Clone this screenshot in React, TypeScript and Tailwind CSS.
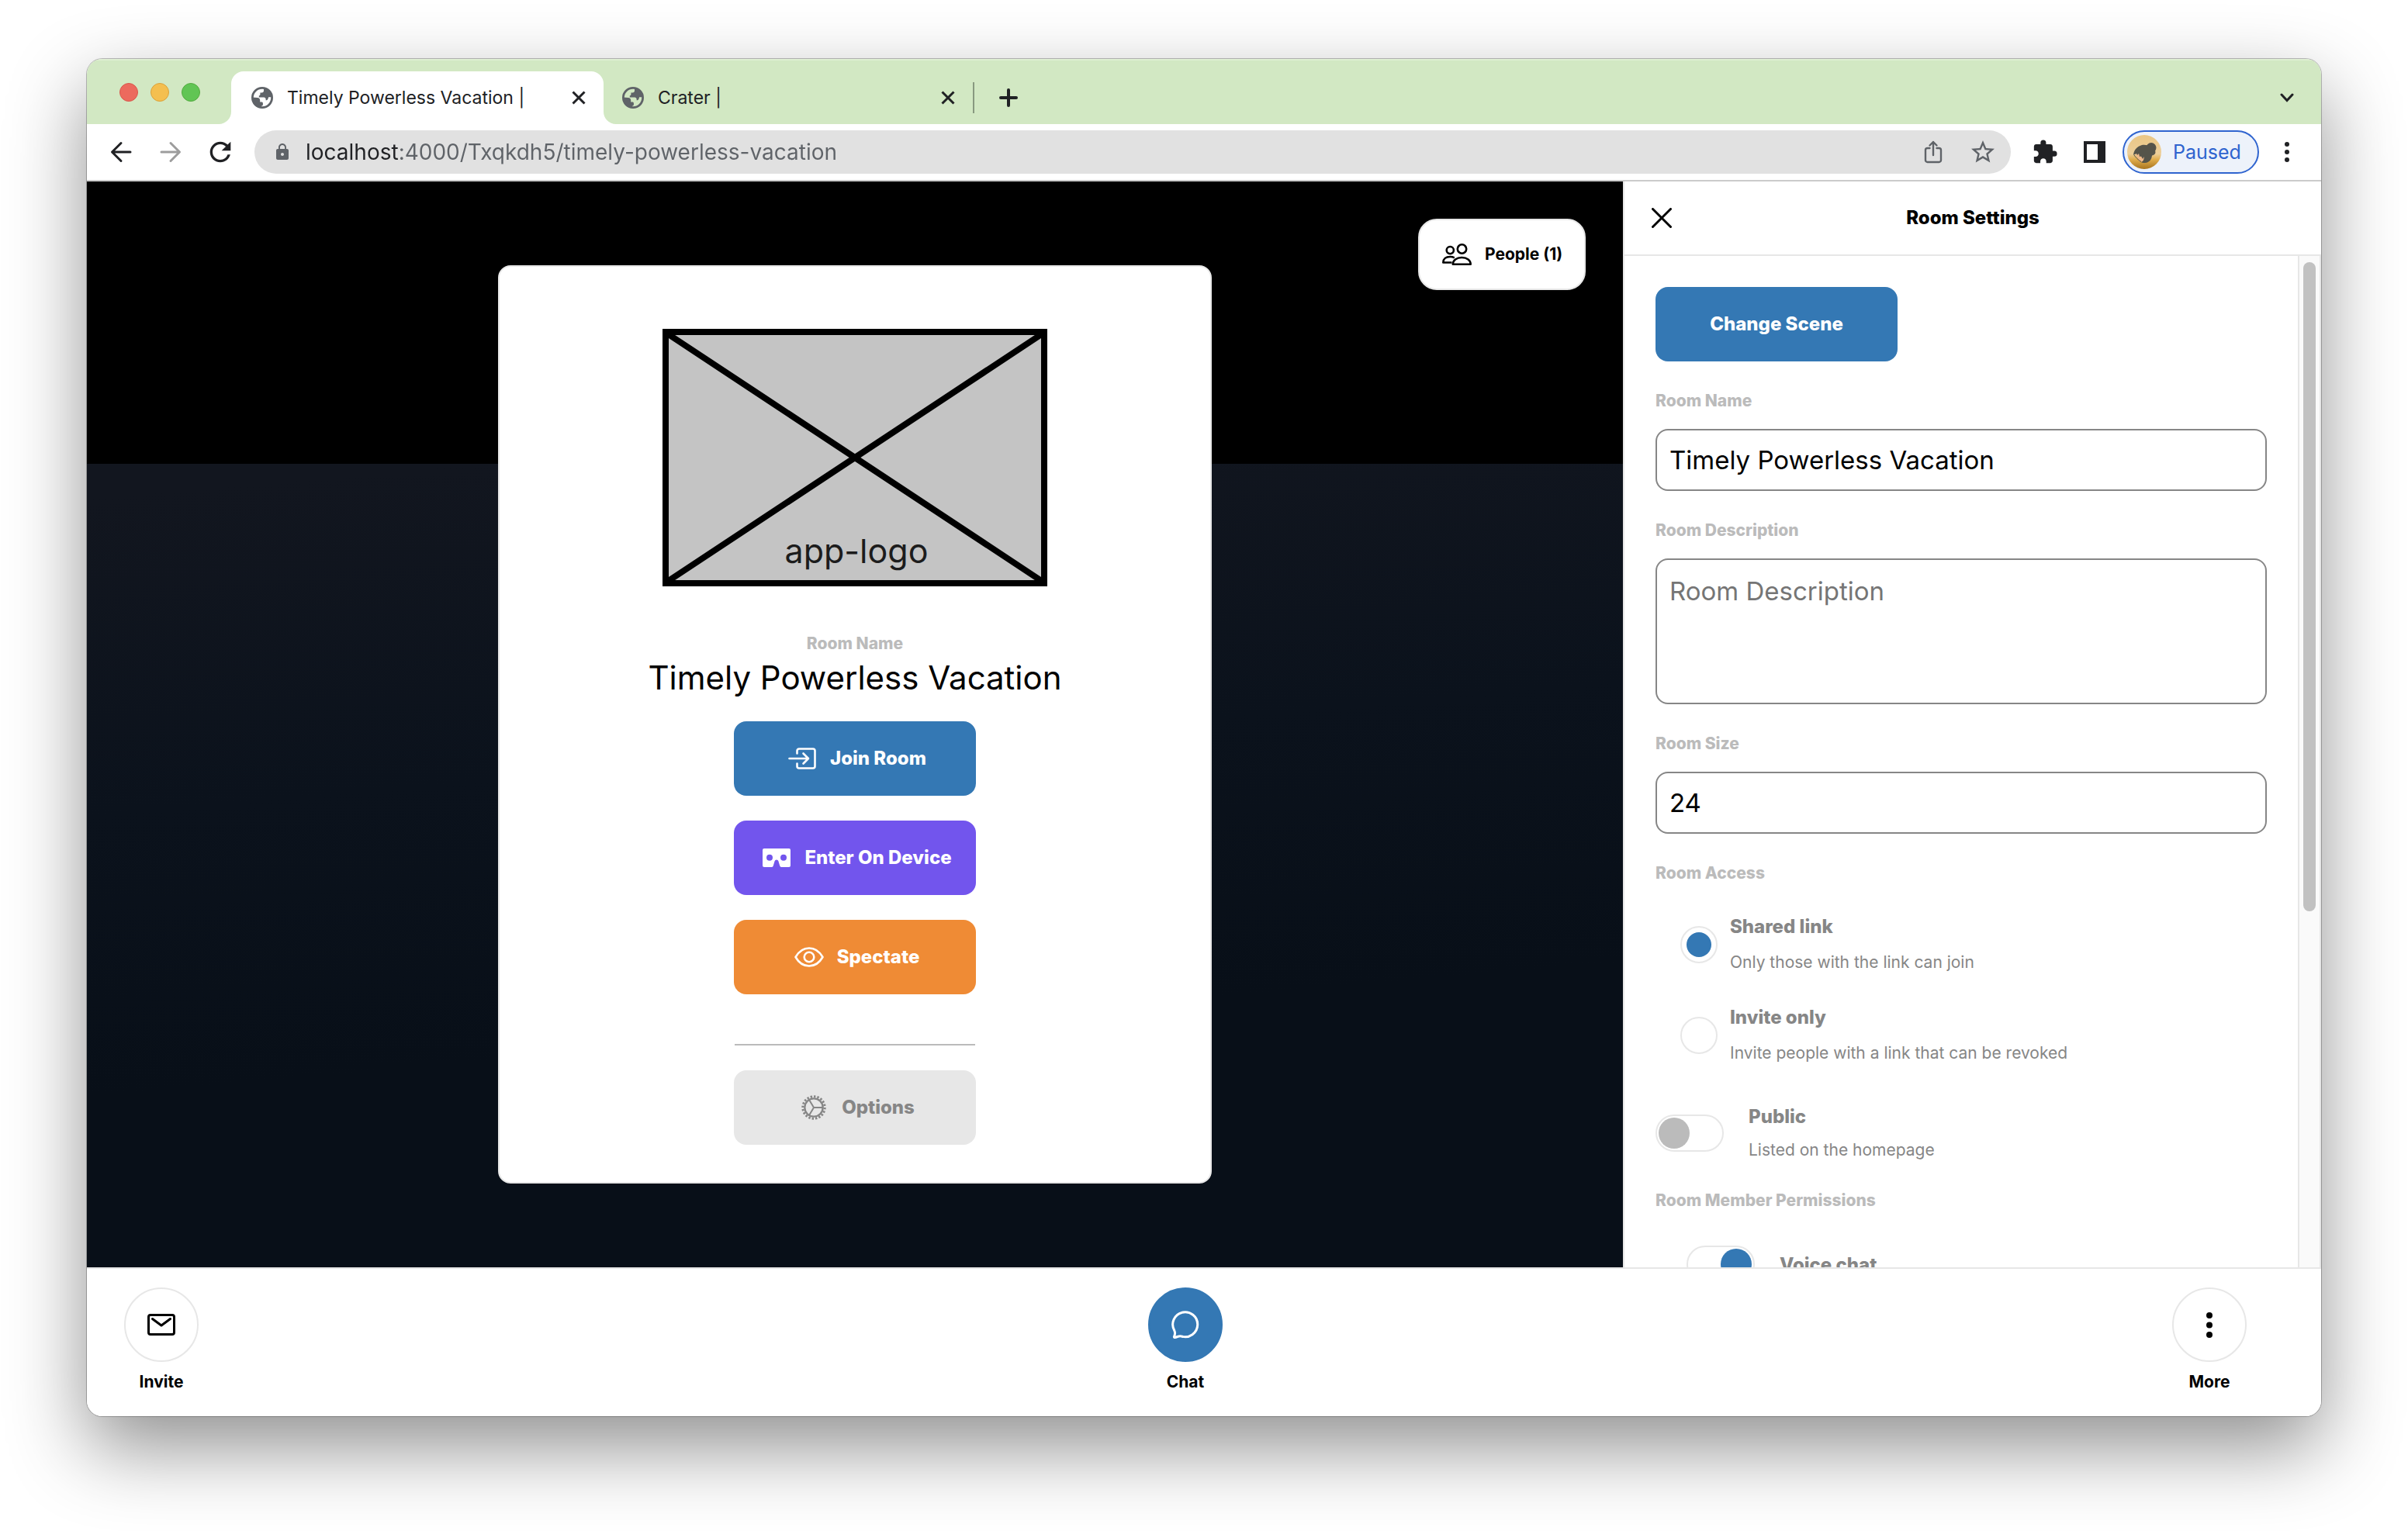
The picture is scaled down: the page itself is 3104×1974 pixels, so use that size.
import React from "react";
import { MdExtension, MdLock, MdRefresh, MdStarBorder } from "react-icons/md";

type IconProps = { className?: string };

/* ---------- Browser icons ---------- */

function GlobeIcon() {
  return (
    <svg viewBox="0 0 28 28" className="size-7 shrink-0 text-[#5f6368]" aria-hidden="true">
      <circle cx="14" cy="14" r="12.6" fill="none" stroke="currentColor" strokeWidth="2.8" />
      <path
        fill="currentColor"
        d="M16 2.2V5c0 1.500-1 2.500-2.600 2.500h-2v2.300c0 .900-.700 1.500-1.600 1.500v2.200h6.400c1.400 0 2.400 1 2.400 2.300v1.500c1.800 0 2.600-1 3-2.400l.500-1.600h4.400C26.500 8 22.500 3 16 2.200z"
      />
      <path
        fill="currentColor"
        d="M1.500 13.500 8 14c2 .200 3.200 1.500 3.200 3.200v2.200h2c1 0 1.700.700 1.700 1.700v1.700c0 1-.700 1.800-1.700 1.800l-.700 2C6 26 1.500 20.500 1.500 13.500z"
      />
    </svg>
  );
}

function CrossIcon({ className }: IconProps) {
  return (
    <svg viewBox="0 0 28 28" className={className} fill="none" stroke="currentColor" aria-hidden="true">
      <path d="M6.500 6.500l15 15M21.500 6.500l-15 15" strokeWidth="3" />
    </svg>
  );
}

function PlusIcon() {
  return (
    <svg viewBox="0 0 24 24" className="size-6" fill="none" stroke="currentColor" strokeWidth="4" strokeLinecap="round" aria-hidden="true">
      <path d="M12 2v20M2 12h20" />
    </svg>
  );
}

function ChevronIcon() {
  return (
    <svg viewBox="0 0 18 12" className="h-3 w-[18px]" fill="none" stroke="currentColor" strokeWidth="3" strokeLinecap="round" aria-hidden="true">
      <path d="M2 2l7 7.500L16 2" />
    </svg>
  );
}

function ArrowIcon({ className }: IconProps) {
  return (
    <svg viewBox="0 0 28 28" className={className} fill="none" stroke="currentColor" strokeWidth="3" strokeLinecap="round" strokeLinejoin="round" aria-hidden="true">
      <path d="M26 14H3M14 2.500L2.500 14 14 25.500" />
    </svg>
  );
}

function ShareIcon() {
  return (
    <svg viewBox="0 0 36 36" className="size-9" fill="none" stroke="currentColor" strokeWidth="2.400" strokeLinecap="round" strokeLinejoin="round" aria-hidden="true">
      <path d="M13.500 13H10.500a2.500 2.500 0 0 0-2.500 2.500v13A2.500 2.500 0 0 0 10.500 31h15a2.500 2.500 0 0 0 2.500-2.500v-13A2.500 2.500 0 0 0 25.500 13H22.500" />
      <path d="M18 22V5M13.500 9.500L18 5l4.500 4.500" />
    </svg>
  );
}

function SidePanelIcon() {
  return (
    <svg viewBox="0 0 28 28" className="size-7" aria-hidden="true">
      <path fill="currentColor" fillRule="evenodd" d="M0 0h28v28H0zM4 4v20h14V4z" />
    </svg>
  );
}

function DotsIcon() {
  return (
    <svg viewBox="0 0 6 26" className="h-[26px] w-1.5" fill="currentColor" aria-hidden="true">
      <circle cx="3" cy="3" r="3" />
      <circle cx="3" cy="13" r="3" />
      <circle cx="3" cy="23" r="3" />
    </svg>
  );
}

function Avatar() {
  return (
    <svg viewBox="0 0 44 44" className="size-11" aria-hidden="true">
      <defs>
        <linearGradient id="avatar-sky" x1="0" y1="0" x2="0" y2="1">
          <stop offset="0" stopColor="#e9c684" />
          <stop offset="0.550" stopColor="#edcf9a" />
          <stop offset="0.720" stopColor="#e0ad4c" />
          <stop offset="1" stopColor="#a8741f" />
        </linearGradient>
      </defs>
      <circle cx="22" cy="22" r="22" fill="url(#avatar-sky)" />
      <path fill="#efb98a" d="M11 25l5-6 6 3 1 9-4 4-4-2z" />
      <circle cx="31" cy="16.500" r="6.500" fill="#55544a" />
      <path
        fill="#55544a"
        d="M8 26c.500-6 4-11 11-13 7-1 14 2 17 7 1.500 4-1 6-4 6.500-.500 5-3 9-9 9.500-2.500.200-4-.300-5-1 3-1 4-4 3.500-7l-1.500 3-2-3.500-2 .500-1-4-2 2-1-2z"
      />
      <path fill="none" stroke="#55544a" d="M9 26c2 3 5 6 9 8.500" />
    </svg>
  );
}

/* ---------- Room icons ---------- */

function PeopleIcon() {
  return (
    <svg viewBox="0 0 38 28" className="h-7 w-[38px]" fill="none" stroke="currentColor" strokeWidth="2.600" strokeLinejoin="round" aria-hidden="true">
      <circle cx="25.500" cy="7" r="5.700" />
      <circle cx="10.300" cy="8.600" r="4.600" />
      <path d="M13.800 26.700c0-5 4.700-8.700 11.500-8.700s11.400 3.700 11.400 8.700z" />
      <path d="M12.500 24.500H1.300c0-4.500 3.500-7.500 9-7.500 2.200 0 4 .500 5.500 1.300" />
    </svg>
  );
}

function EnterIcon() {
  return (
    <svg viewBox="0 0 36 28" className="h-7 w-9" fill="none" stroke="currentColor" strokeWidth="2.600" strokeLinecap="round" strokeLinejoin="round" aria-hidden="true">
      <path d="M11.500 7.500V4a2.500 2.500 0 0 1 2.500-2.500h18A2.500 2.500 0 0 1 34.500 4v20a2.500 2.500 0 0 1-2.500 2.500H14a2.500 2.500 0 0 1-2.500-2.500v-3.500" />
      <path d="M1.500 14H26M19.500 7.500L26 14l-6.500 6.500" />
    </svg>
  );
}

function HeadsetIcon() {
  return (
    <svg viewBox="0 0 36 24" className="h-6 w-9" aria-hidden="true">
      <path
        fill="currentColor"
        fillRule="evenodd"
        d="M2 0h32a2 2 0 0 1 2 2v20a2 2 0 0 1-2 2H24.500a2.500 2.500 0 0 1-2.200-1.600l-1.900-6.200a2.500 2.500 0 0 0-4.800 0l-1.900 6.200A2.500 2.500 0 0 1 11.500 24H2a2 2 0 0 1-2-2V2a2 2 0 0 1 2-2zM9 7.800a4 4 0 1 0 0 8 4 4 0 0 0 0-8zM27 7.800a4 4 0 1 0 0 8 4 4 0 0 0 0-8z"
      />
    </svg>
  );
}

function EyeIcon() {
  return (
    <svg viewBox="0 0 38 26" className="h-[26px] w-[38px]" fill="none" stroke="currentColor" strokeWidth="2.600" strokeLinejoin="round" aria-hidden="true">
      <path d="M1.500 13C5.500 6 11.500 1.500 19 1.500S32.500 6 36.500 13C32.500 20 26.500 24.500 19 24.500S5.500 20 1.500 13z" />
      <circle cx="19" cy="13" r="6.300" />
    </svg>
  );
}

function GearIcon() {
  return (
    <svg viewBox="0 0 32 32" className="size-8" fill="none" stroke="currentColor" aria-hidden="true">
      <circle cx="16" cy="16" r="11.700" strokeWidth="2.300" />
      <circle cx="16" cy="16" r="14.200" strokeWidth="3" pathLength="80" strokeDasharray="2.200 1.800" />
      <path d="M16 16h11.500M16 16l-6-10M16 16l-6 10" strokeWidth="2" />
    </svg>
  );
}

function MailIcon() {
  return (
    <svg viewBox="0 0 36 28" className="h-7 w-9" fill="none" stroke="currentColor" strokeWidth="3" strokeLinecap="round" strokeLinejoin="round" aria-hidden="true">
      <rect x="1.500" y="1.500" width="33" height="25" rx="2.500" />
      <path d="M6.500 6.500L18 15 29.500 6.500" />
    </svg>
  );
}

function ChatIcon() {
  return (
    <svg viewBox="0 0 36 36" className="size-9" fill="none" stroke="currentColor" strokeWidth="3" strokeLinejoin="round" aria-hidden="true">
      <path d="M3.800 25.600A16 16 0 1 1 13 33c-3-1.200-5 .800-8.600 1.500-.800.100-1.200-.500-.900-1.200C4.800 30.500 5 28 3.800 25.600z" />
    </svg>
  );
}

function MoreIcon() {
  return (
    <svg viewBox="0 0 8 33" className="h-[33px] w-2" fill="currentColor" aria-hidden="true">
      <circle cx="4" cy="4" r="4" />
      <circle cx="4" cy="16.500" r="4" />
      <circle cx="4" cy="29" r="4" />
    </svg>
  );
}

/* ---------- Browser chrome ---------- */

function TabFlare({ className }: IconProps) {
  return (
    <svg viewBox="0 0 16 16" className={className} aria-hidden="true">
      <path fill="#fff" d="M16 0v16H0A16 16 0 0 0 16 0z" />
    </svg>
  );
}

function TabContent({ title }: { title: string }) {
  return (
    <>
      <GlobeIcon />
      <span className="flex-1 truncate text-[23px] leading-8">{title}</span>
      <button type="button" aria-label={`Close ${title}`}>
        <CrossIcon className="size-7" />
      </button>
    </>
  );
}

function TabStrip() {
  return (
    <header className="flex h-[84px] shrink-0 items-end border-t-2 border-[#dfefd3] bg-[#d2e8c3] text-[#202124]">
      <div className="flex h-full w-[186px] items-center gap-4 pl-[42px]">
        <span className="size-6 rounded-full border border-[#d9574c] bg-[#ec6a5e]" />
        <span className="size-6 rounded-full border border-[#dba13b] bg-[#f4bf4f]" />
        <span className="size-6 rounded-full border border-[#54ab40] bg-[#61c554]" />
      </div>
      <div className="relative flex h-[68px] w-[480px] items-center gap-[18px] rounded-t-2xl bg-white pr-[18px] pl-[26px]">
        <TabFlare className="absolute bottom-0 -left-4 size-4" />
        <TabContent title="Timely Powerless Vacation |" />
        <TabFlare className="absolute -right-4 bottom-0 size-4 -scale-x-100" />
      </div>
      <div className="flex h-[68px] w-[478px] items-center gap-[18px] pl-6">
        <TabContent title="Crater |" />
        <span className="h-10 w-0.5 bg-[#889980]" />
      </div>
      <button type="button" aria-label="New tab" className="ml-6 flex h-[68px] w-10 items-center justify-center">
        <PlusIcon />
      </button>
      <button type="button" aria-label="Search tabs" className="mr-6 ml-auto flex h-[68px] w-10 items-center justify-center">
        <ChevronIcon />
      </button>
    </header>
  );
}

function ToolButton({ label, className = "", children }: { label: string; className?: string; children: React.ReactNode }) {
  return (
    <button type="button" aria-label={label} className={`flex size-10 shrink-0 items-center justify-center ${className}`}>
      {children}
    </button>
  );
}

function Toolbar() {
  return (
    <div className="flex h-[74px] shrink-0 items-center gap-6 border-b-2 border-[#cbcbcb] bg-white px-6 text-[#202124]">
      <ToolButton label="Back">
        <ArrowIcon className="size-7" />
      </ToolButton>
      <ToolButton label="Forward" className="text-[#9d9d9d]">
        <ArrowIcon className="size-7 rotate-180" />
      </ToolButton>
      <ToolButton label="Reload">
        <MdRefresh className="size-10" />
      </ToolButton>
      <div className="flex h-14 flex-1 items-center rounded-full bg-[#e1e1e1] pr-[18px] pl-6 text-[#5f6368]">
        <MdLock className="size-6" aria-hidden="true" />
        <input
          aria-label="Address"
          defaultValue="localhost:4000/Txqkdh5/timely-powerless-vacation"
          className="ml-[18px] flex-1 bg-[linear-gradient(90deg,#202124_121px,#5f6368_121px)] bg-clip-text text-[28px] leading-10 text-transparent outline-none"
        />
        <button type="button" aria-label="Share" className="mr-7">
          <ShareIcon />
        </button>
        <button type="button" aria-label="Bookmark this tab">
          <MdStarBorder className="size-9" />
        </button>
      </div>
      <ToolButton label="Extensions">
        <MdExtension className="size-[34px]" />
      </ToolButton>
      <div className="flex items-center gap-4">
        <ToolButton label="Side panel">
          <SidePanelIcon />
        </ToolButton>
        <button type="button" className="flex h-14 w-44 items-center gap-[15px] rounded-full border-2 border-[#2f64cf] bg-[#edf2fa] pl-1 text-[25px] leading-8 text-[#2f64cf]">
          <Avatar />
          Paused
        </button>
        <ToolButton label="Browser menu">
          <DotsIcon />
        </ToolButton>
      </div>
    </div>
  );
}

/* ---------- Room ---------- */

const entryButtonStyles = {
  primary: "bg-[#3478b4] text-white",
  accent: "bg-[#7255ed] text-white",
  warning: "bg-[#ef8b35] text-white",
  muted: "bg-[#e7e7e7] text-[#868686]",
};

function EntryButton({ tone, icon, children }: { tone: keyof typeof entryButtonStyles; icon?: React.ReactNode; children: React.ReactNode }) {
  return (
    <button
      type="button"
      className={`flex h-24 w-[312px] items-center justify-center gap-3 rounded-2xl text-2xl leading-8 font-extrabold ${entryButtonStyles[tone]}`}
    >
      {icon && <span className="flex size-12 items-center justify-center">{icon}</span>}
      {children}
    </button>
  );
}

function LogoPlaceholder() {
  return (
    <svg viewBox="0 0 496 332" className="h-[332px] w-[496px]" role="img" aria-label="app-logo">
      <rect x="4" y="4" width="488" height="324" fill="#c4c4c4" />
      <path d="M6 6l484 320M490 6L6 326" stroke="#000" strokeWidth="8" />
      <rect x="4" y="4" width="488" height="324" fill="none" stroke="#000" strokeWidth="8" />
      <text x="250" y="302" textAnchor="middle" fontSize="43" fill="#1c1c1c">
        app-logo
      </text>
    </svg>
  );
}

function EntryCard() {
  return (
    <section className="flex w-[920px] flex-col items-center rounded-2xl border-2 border-[#e7e7e7] bg-white pt-20 pb-12">
      <LogoPlaceholder />
      <p className="mt-[58px] text-[21px] leading-8 font-extrabold text-[#bbb]">Room Name</p>
      <h1 className="text-[42px] leading-[56px] text-black">Timely Powerless Vacation</h1>
      <div className="mt-7 flex flex-col gap-8">
        <EntryButton tone="primary" icon={<EnterIcon />}>Join Room</EntryButton>
        <EntryButton tone="accent" icon={<HeadsetIcon />}>Enter On Device</EntryButton>
        <EntryButton tone="warning" icon={<EyeIcon />}>Spectate</EntryButton>
      </div>
      <hr className="mt-16 mb-8 w-[310px] border-t-2 border-[#bbb]" />
      <EntryButton tone="muted" icon={<GearIcon />}>Options</EntryButton>
    </section>
  );
}

function Viewport() {
  return (
    <main className="relative flex min-w-0 flex-1 items-center justify-center bg-[linear-gradient(175deg,#12161f_26%,#0b121c_52%,#080f18_75%)]">
      <div className="absolute inset-x-0 top-0 h-[26%] bg-black" />
      <button
        type="button"
        className="absolute top-12 right-12 flex h-[92px] w-[216px] items-center gap-3 rounded-3xl border-2 border-[#e7e7e7] bg-white pl-6 text-[21px] leading-8 font-bold text-black"
      >
        <span className="flex size-12 items-center justify-center">
          <PeopleIcon />
        </span>
        People (1)
      </button>
      <div className="relative">
        <EntryCard />
      </div>
    </main>
  );
}

/* ---------- Settings sidebar ---------- */

const sectionLabel = "block text-[21px] leading-8 font-extrabold text-[#bbb]";
const fieldBox = "mt-5 block w-full rounded-2xl border-2 border-[#868686] bg-white px-4 text-[33px] text-black outline-none";

function Field({ id, label, children }: { id: string; label: string; children: React.ReactNode }) {
  return (
    <div className="mt-[35px]">
      <label htmlFor={id} className={sectionLabel}>
        {label}
      </label>
      {children}
    </div>
  );
}

function AccessOption({ title, description, checked }: { title: string; description: string; checked?: boolean }) {
  return (
    <label className="flex items-center gap-4">
      <input
        type="radio"
        name="room-access"
        defaultChecked={checked}
        className="size-12 shrink-0 appearance-none rounded-full border-2 border-[#e7e7e7] bg-white bg-clip-content p-1.5 checked:bg-[#3478b4]"
      />
      <span className="flex flex-col text-[#868686]">
        <span className="text-2xl leading-[46px] font-extrabold">{title}</span>
        <span className="text-[21px] leading-[46px]">{description}</span>
      </span>
    </label>
  );
}

function Toggle({ title, description, checked }: { title: string; description?: string; checked?: boolean }) {
  return (
    <label className="flex items-center gap-8">
      <input
        type="checkbox"
        defaultChecked={checked}
        className="h-12 w-[88px] shrink-0 appearance-none rounded-full border-2 border-[#e7e7e7] bg-white p-0.5 before:block before:size-10 before:rounded-full before:bg-[#bbb] checked:before:ml-auto checked:before:bg-[#3478b4]"
      />
      <span className="flex flex-col text-[#868686]">
        <span className="text-2xl leading-[43px] font-extrabold">{title}</span>
        {description && <span className="text-[21px] leading-[43px]">{description}</span>}
      </span>
    </label>
  );
}

function SettingsSidebar() {
  return (
    <aside className="flex w-[900px] shrink-0 flex-col border-l-2 border-[#e7e7e7] bg-white">
      <div className="grid h-24 shrink-0 grid-cols-[96px_1fr_96px] items-center border-b-2 border-[#e7e7e7] text-black">
        <button type="button" aria-label="Close settings" className="flex justify-center">
          <svg viewBox="0 0 26 26" className="size-[26px]" fill="none" stroke="currentColor" strokeWidth="3" strokeLinecap="round" aria-hidden="true">
            <path d="M1.500 1.500l23 23M24.500 1.500l-23 23" />
          </svg>
        </button>
        <h2 className="text-center text-2xl leading-8 font-extrabold">Room Settings</h2>
      </div>
      <div className="flex min-h-0 flex-1">
        <form className="min-w-0 flex-1 overflow-hidden p-10">
          <EntryButton tone="primary">Change Scene</EntryButton>
          <Field id="room-name" label="Room Name">
            <input id="room-name" defaultValue="Timely Powerless Vacation" className={`${fieldBox} h-20`} />
          </Field>
          <Field id="room-description" label="Room Description">
            <textarea
              id="room-description"
              placeholder="Room Description"
              className={`${fieldBox} h-[188px] resize-none py-4 leading-[48px] placeholder:text-[#757575]`}
            />
          </Field>
          <Field id="room-size" label="Room Size">
            <input id="room-size" type="number" defaultValue={24} className={`${fieldBox} h-20`} />
          </Field>
          <fieldset className="mt-[35px]">
            <legend className={sectionLabel}>Room Access</legend>
            <div className="mt-[30px] flex flex-col gap-[25px] pl-8">
              <AccessOption title="Shared link" description="Only those with the link can join" checked />
              <AccessOption title="Invite only" description="Invite people with a link that can be revoked" />
            </div>
          </fieldset>
          <div className="mt-[37px]">
            <Toggle title="Public" description="Listed on the homepage" />
          </div>
          <fieldset className="mt-7">
            <legend className={sectionLabel}>Room Member Permissions</legend>
            <div className="mt-[42px] pl-10">
              <Toggle title="Voice chat" checked />
            </div>
          </fieldset>
        </form>
        <div className="flex w-[30px] justify-center border-x-2 border-[#e7e7e7] bg-[#fafafa] py-2">
          <div className="h-[65%] w-4 rounded-full bg-[#c1c1c1]" />
        </div>
      </div>
    </aside>
  );
}

/* ---------- Bottom bar ---------- */

function BarButton({ label, icon, active }: { label: string; icon: React.ReactNode; active?: boolean }) {
  return (
    <button type="button" className="flex w-24 flex-col items-center gap-2.5 text-black">
      <span
        className={`flex size-24 items-center justify-center rounded-full border-2 ${
          active ? "border-[#3478b4] bg-[#3478b4] text-white" : "border-[#e7e7e7] bg-white"
        }`}
      >
        {icon}
      </span>
      <span className="text-[21px] leading-8 font-bold">{label}</span>
    </button>
  );
}

function BottomBar() {
  return (
    <footer className="flex shrink-0 justify-between border-t-2 border-[#e7e7e7] bg-white pt-6 pr-24 pb-7 pl-12">
      <BarButton label="Invite" icon={<MailIcon />} />
      <BarButton label="Chat" icon={<ChatIcon />} active />
      <BarButton label="More" icon={<MoreIcon />} />
    </footer>
  );
}

export default function App() {
  return (
    <div className="flex h-screen flex-col overflow-hidden bg-white px-28 pt-[76px] pb-[148px] font-['Inter','Liberation_Sans',sans-serif]">
      <div className="flex min-h-0 flex-1 flex-col overflow-hidden rounded-[20px] bg-white shadow-[0_0_0_1px_rgba(0,0,0,0.25),0_40px_100px_rgba(0,0,0,0.44)]">
        <TabStrip />
        <Toolbar />
        <div className="flex min-h-0 flex-1">
          <Viewport />
          <SettingsSidebar />
        </div>
        <BottomBar />
      </div>
    </div>
  );
}
